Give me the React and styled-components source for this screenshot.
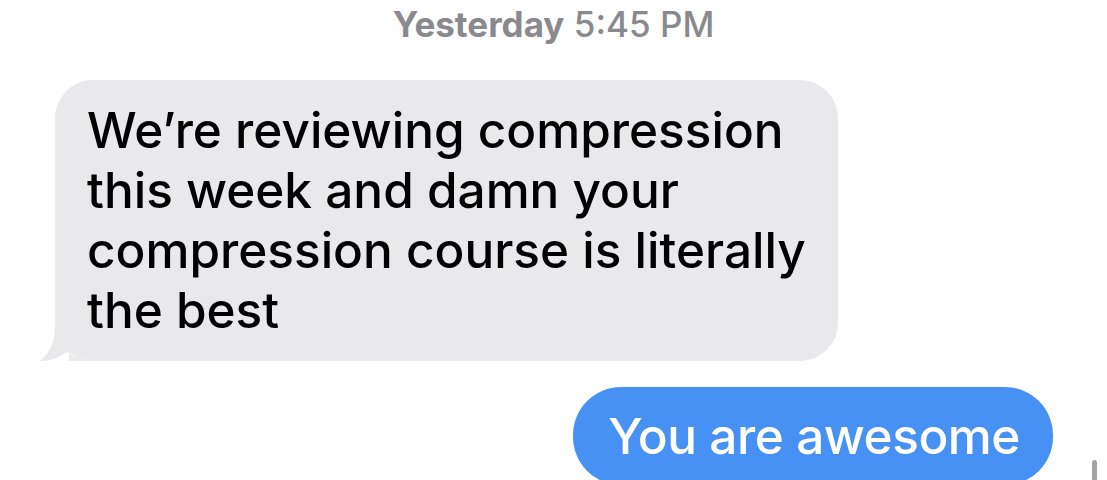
import React from "react";
import styled, { createGlobalStyle } from "styled-components";

const Global = createGlobalStyle`
  html, body { margin: 0; padding: 0; background: #ffffff; }
  body { font-family: Inter, "Noto Sans", sans-serif; -webkit-font-smoothing: antialiased; }
`;

const Page = styled.div`
  position: relative;
  width: 1107px;
  height: 480px;
  overflow: hidden;
  display: flex;
  flex-direction: column;
  background: #ffffff;
`;

const Stamp = styled.div`
  text-align: center;
  font-size: 35px;
  line-height: 42px;
  color: #8a8a8e;
  padding-top: 3px;
  font-weight: 500;
  b { font-weight: 650; }
`;

const Row = styled.div`
  display: flex;
  justify-content: ${(p) => (p.$me ? "flex-end" : "flex-start")};
  padding: ${(p) => (p.$me ? "0 54px 0 0" : "0 0 0 55px")};
  margin-top: ${(p) => p.$top}px;
`;

const Bubble = styled.div`
  position: relative;
  box-sizing: border-box;
  width: ${(p) => (p.$w ? `${p.$w}px` : "auto")};
  padding: ${(p) => p.$pad};
  border-radius: ${(p) => p.$r}px;
  background: ${(p) => (p.$me ? "#4791f5" : "#e9e9eb")};
  color: ${(p) => (p.$me ? "#ffffff" : "#000000")};
  font-size: 49.5px;
  line-height: 60px;
  font-weight: 500;
  letter-spacing: ${(p) => (p.$me ? "-0.45px" : "0")};
`;

const Tail = styled.svg`
  position: absolute;
  left: -16px;
  bottom: 0;
`;

const Scroll = styled.div`
  position: absolute;
  right: 10px;
  top: 460px;
  width: 5px;
  height: 30px;
  border-radius: 3px;
  background: #a4a4a4;
`;

export default function App() {
  return (
    <Page>
      <Global />
      <Stamp>
        <b>Yesterday</b> 5:45 PM
      </Stamp>
      <Row $top={35}>
        <Bubble $w={783} $pad="20px 30px 21px 32px" $r={38}>
          <Tail width="60" height="48" viewBox="0 0 60 48">
            <path
              d="M16 0 L30 0 L30 48 L60 48 C44 48 34 44 28 39 C20 45 10 48 0 48 C10 42 16 30 16 12 Z"
              fill="#e9e9eb"
            />
          </Tail>
          We’re reviewing compression this week and damn your compression course is literally the best
        </Bubble>
      </Row>
      <Row $me $top={26}>
        <Bubble $me $pad="19px 33px 19px 35px" $r={48}>
          You are awesome
        </Bubble>
      </Row>
      <Scroll />
    </Page>
  );
}
